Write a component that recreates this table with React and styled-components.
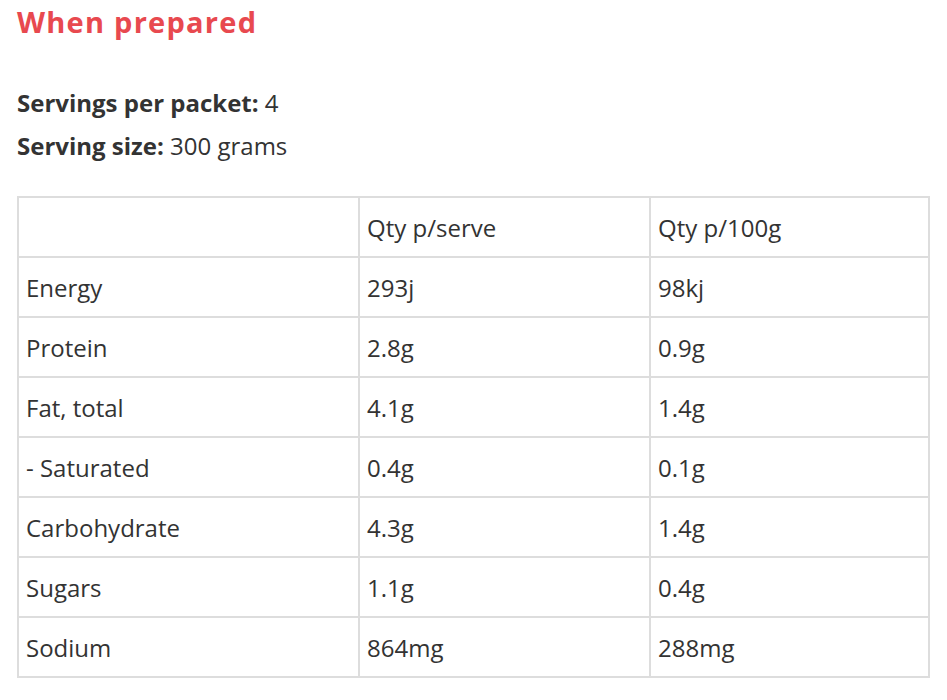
import React from "react";
import styled, { createGlobalStyle } from "styled-components";

const Global = createGlobalStyle`
  html, body { margin: 0; padding: 0; background: #fff; }
  body { font-family: "Open Sans", "Noto Sans", sans-serif; color: #333; }
`;

const Page = styled.div`
  padding: 0 17px;
  width: 913px;
`;

const Heading = styled.h2`
  margin: 0;
  padding-top: 1px;
  font-size: 29px;
  line-height: 42px;
  font-weight: 700;
  letter-spacing: 1.25px;
  color: #e8494f;
`;

const Info = styled.div`
  margin-top: 38px;
  display: flex;
  flex-direction: column;
`;

const InfoLine = styled.p`
  margin: 0;
  font-size: 24px;
  line-height: 43px;
  color: #333;
  b { font-weight: 700; }
`;

const Table = styled.table`
  margin-top: 29px;
  border-collapse: collapse;
  width: 911px;
  table-layout: fixed;
  font-size: 24px;
  color: #333;
`;

const Cell = styled.td`
  border: 2px solid #dddddd;
  height: 60px;
  padding: 2px 7px 0;
  box-sizing: border-box;
  vertical-align: middle;
  line-height: 1;
  width: ${(p) => p.$w}px;
`;

const rows = [
  ["Energy", "293j", "98kj"],
  ["Protein", "2.8g", "0.9g"],
  ["Fat, total", "4.1g", "1.4g"],
  ["- Saturated", "0.4g", "0.1g"],
  ["Carbohydrate", "4.3g", "1.4g"],
  ["Sugars", "1.1g", "0.4g"],
  ["Sodium", "864mg", "288mg"],
];

export default function App() {
  return (
    <Page>
      <Global />
      <Heading>When prepared</Heading>
      <Info>
        <InfoLine><b>Servings per packet:</b> 4</InfoLine>
        <InfoLine><b>Serving size:</b> 300 grams</InfoLine>
      </Info>
      <Table>
        <tbody>
          <tr>
            <Cell $w={341}></Cell>
            <Cell $w={291}>Qty p/serve</Cell>
            <Cell $w={279}>Qty p/100g</Cell>
          </tr>
          {rows.map((r) => (
            <tr key={r[0]}>
              <Cell>{r[0]}</Cell>
              <Cell>{r[1]}</Cell>
              <Cell>{r[2]}</Cell>
            </tr>
          ))}
        </tbody>
      </Table>
    </Page>
  );
}
